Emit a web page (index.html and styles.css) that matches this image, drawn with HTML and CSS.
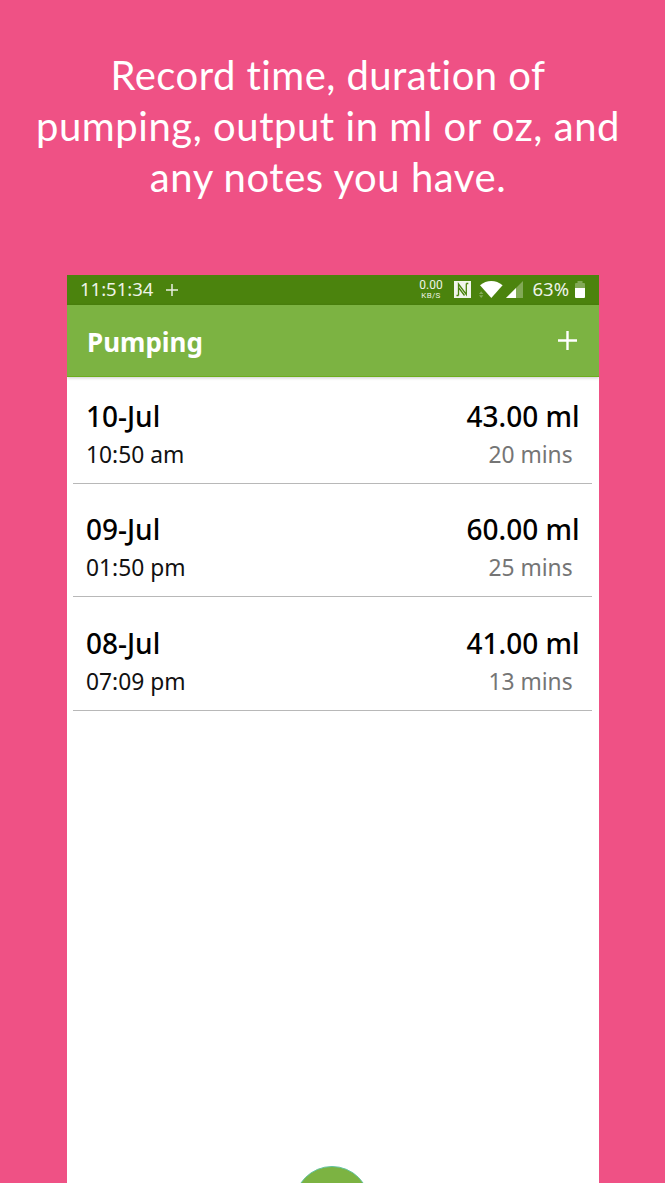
FILE: index.html
```html
<!DOCTYPE html>
<html lang="en">
<head>
<meta charset="utf-8">
<title>Pumping</title>
<link rel="stylesheet" href="styles.css">
</head>
<body>
<main class="promo">
  <h1 class="headline">
    <span class="line line-one">Record time, duration of</span>
    <span class="line line-two">pumping, output in ml or oz, and</span>
    <span class="line line-three">any notes you have.</span>
  </h1>
  <section class="phone">
    <div class="status">
      <span class="clock">11:51:34</span>
      <svg class="status-plus" width="12" height="12" viewBox="0 0 12 12"><path d="M6 0v12M0 6h12" stroke="#e9f0e1" stroke-width="1.5"/></svg>
      <div class="speed"><span class="rate">0.00</span><span class="unit">KB/S</span></div>
      <svg class="nfc" width="17" height="17" viewBox="0 0 17 17"><path fill="#f1f5ec" d="M0 0h17v17H0z"/><path fill="none" stroke="#4b830d" stroke-width="1.300" d="M4.500 14.500V3L12.300 13.500V2.500M4.500 6.500l6 8M2.500 14.500h2M12.300 2.500h2"/></svg>
      <svg class="wifi" width="24" height="17" viewBox="0 0 24 17"><path fill="#fff" d="M1 4.300C7.600-1.400 17-1.400 23.600 4.300L12.300 17z"/><path fill="#82a956" d="M0 13l2.200-2.800 2.200 2.800zM0 14.200h4.400l-2.200 2.800z"/></svg>
      <svg class="signal" width="17" height="17" viewBox="0 0 17 17"><path fill="#82a956" d="M17 0v17H0z"/><path fill="#fff" d="M10 7v10H0z"/></svg>
      <span class="percent">63%</span>
      <svg class="battery" width="10" height="17" viewBox="0 0 10 17"><path fill="#82a956" d="M2.500 0h5v2H9q1 0 1 1v5H0V3q0-1 1-1h1.500z"/><path fill="#fff" d="M0 7h10v9q0 1-1 1H1q-1 0-1-1z"/></svg>
    </div>
    <header class="toolbar">
      <h2 class="title">Pumping</h2>
      <svg class="add" width="19" height="19" viewBox="0 0 19 19"><path d="M9.500 0v19M0 9.500h19" stroke="#fff" stroke-width="2.400"/></svg>
    </header>
    <ul class="list">
      <li class="entry">
        <div class="row"><span class="date">10-Jul</span><span class="amount">43.00 ml</span></div>
        <div class="row detail"><span class="time">10:50 am</span><span class="mins">20 mins</span></div>
      </li>
      <li class="entry">
        <div class="row"><span class="date">09-Jul</span><span class="amount">60.00 ml</span></div>
        <div class="row detail"><span class="time">01:50 pm</span><span class="mins">25 mins</span></div>
      </li>
      <li class="entry">
        <div class="row"><span class="date">08-Jul</span><span class="amount">41.00 ml</span></div>
        <div class="row detail"><span class="time">07:09 pm</span><span class="mins">13 mins</span></div>
      </li>
    </ul>
    <div class="fab"></div>
  </section>
</main>
</body>
</html>
```

FILE: styles.css
```css
* { box-sizing: border-box; }
body { margin: 0; background: #ef5185; font-family: "Noto Sans", sans-serif; }
.promo { height: 1183px; overflow: hidden; display: flex; flex-direction: column; }
.headline { margin: 0; height: 274.500px; padding: 50px 9px 0 0; color: #fff; font: 400 40px/51px Lato, sans-serif; text-align: center; }
.line { display: block; white-space: nowrap; }
.line-one { letter-spacing: 0.450px; }
.line-two { letter-spacing: 0.550px; }
.line-three { letter-spacing: 0.550px; }
.phone { position: relative; flex: 1; width: 532px; margin-left: 66.600px; background: #fff; overflow: hidden; }
.status { height: 30.500px; padding: 0 13.600px 0 13.400px; display: flex; align-items: center; background: #4b830d; color: #eef3e8; font-size: 18.500px; line-height: 28px; }
.clock { width: 73px; white-space: nowrap; margin-top: -1px; }
.status-plus { margin-left: 13px; }
.speed { width: 24px; margin-left: auto; display: flex; flex-direction: column; align-items: center; font-family: Roboto, sans-serif; }
.rate { font-size: 12px; line-height: 13px; margin-top: -2px; }
.unit { font-size: 8px; line-height: 9px; letter-spacing: 0.300px; margin-top: -1px; margin-bottom: -1px; }
.nfc { margin-left: 11px; }
.wifi { margin-left: 8px; }
.signal { margin-left: 3px; }
.percent { margin-left: 9.500px; margin-top: -1px; width: 37.500px; white-space: nowrap; }
.battery { margin-left: 5px; }
.toolbar { height: 72px; padding: 0 22px 0 20.400px; display: flex; align-items: center; justify-content: space-between; background: #7cb342; border-bottom: 1px solid #6dad1e; box-shadow: 0 1px 3px rgba(0, 0, 0, 0.2); }
.title { margin: 2px 0 0; color: #fff; font-size: 26px; font-weight: 700; line-height: 36px; }
.list { margin: 0; padding: 0 7px 0 6px; list-style: none; }
.entry { height: 113.700px; padding: 18.600px 12px 0 13.400px; border-bottom: 1.500px solid #b8b8b8; }
.entry:first-child { height: 106.500px; }
.entry + .entry { padding-top: 25.900px; }
.row { display: flex; justify-content: space-between; line-height: 40px; white-space: nowrap; }
.date, .amount { font-size: 28px; font-weight: 500; color: #000; }
.detail { line-height: 38.500px; padding-right: 7px; font-size: 22.800px; }
.time { color: #111; }
.mins { color: #757575; }
.fab { position: absolute; left: 227.500px; top: 891.500px; width: 76px; height: 76px; border-radius: 50%; background: #7cb342; border: 1px solid #62c3a0; }
```
